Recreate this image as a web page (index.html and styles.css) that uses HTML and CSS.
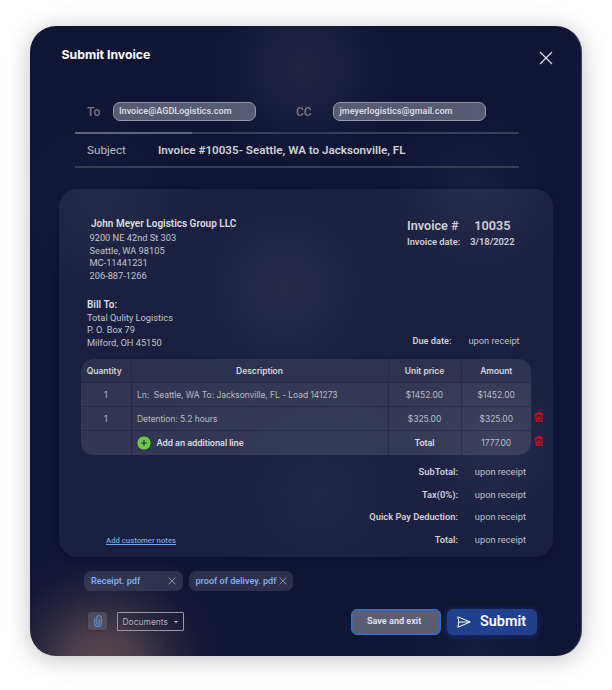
FILE: index.html
```html
<!DOCTYPE html>
<html lang="en">
<head>
<meta charset="utf-8">
<title>Submit Invoice</title>
<link rel="stylesheet" href="styles.css">
</head>
<body>
<main class="modal">
  <header class="head">
    <h1>Submit Invoice</h1>
    <svg class="close" viewBox="0 0 14 14"><path d="M1 1L13 13M13 1L1 13"/></svg>
  </header>

  <section class="mail">
    <div class="row recipients">
      <span class="label to">To</span>
      <span class="pill pill-to"><span>Invoice@AGDLogistics.com</span><svg viewBox="0 0 8 8"><path d="M1 1L7 7M7 1L1 7"/></svg></span>
      <span class="label cc">CC</span>
      <span class="pill pill-cc"><span>jmeyerlogistics@gmail.com</span><svg viewBox="0 0 8 8"><path d="M1 1L7 7M7 1L1 7"/></svg></span>
    </div>
    <div class="row subject">
      <span class="subject-label">Subject</span>
      <strong>Invoice #10035- Seattle, WA to Jacksonville, FL</strong>
    </div>
  </section>

  <section class="card">
    <div class="parties">
      <div class="from">
        <h2>John Meyer Logistics Group LLC</h2>
        <p>9200 NE 42nd St 303</p>
        <p>Seattle, WA 98105</p>
        <p>MC-11441231</p>
        <p>206-887-1266</p>
        <div class="bill">
          <h3>Bill To:</h3>
          <p>Total Qulity Logistics</p>
          <p>P. O. Box 79</p>
          <p>Milford, OH 45150</p>
        </div>
      </div>
      <div class="meta">
        <div class="number"><b>Invoice #</b><b class="no">10035</b></div>
        <div class="date"><b>Invoice date:</b><b class="day">3/18/2022</b></div>
        <div class="due"><b>Due date:</b><span class="upon">upon receipt</span></div>
      </div>
    </div>

    <div class="lines">
      <div class="table">
        <div class="tr th"><span>Quantity</span><span>Description</span><span>Unit price</span><span>Amount</span></div>
        <div class="tr"><span>1</span><span class="desc">Ln:&nbsp; Seattle, WA To: Jacksonville, FL - Load 141273</span><span>$1452.00</span><span>$1452.00</span></div>
        <div class="tr"><span>1</span><span class="desc">Detention: 5.2 hours</span><span>$325.00</span><span>$325.00</span></div>
        <div class="tr last"><span></span><span class="desc add"><svg viewBox="0 0 14 14"><circle cx="7" cy="7" r="6.6"/><path d="M7 4V10M4 7H10"/></svg><b>Add an additional line</b></span><span><b>Total</b></span><span>1777.00</span></div>
      </div>
      <div class="trash">
        <svg viewBox="0 0 10 10"><path d="M.8 2.2H9.2M3.3 2.2V.7H6.7V2.2M1.8 2.2L2.3 9.3H7.7L8.2 2.2M4.2 4.3V7M5.8 4.3V7M4 7.1H6"/></svg>
        <svg viewBox="0 0 10 10"><path d="M.8 2.2H9.2M3.3 2.2V.7H6.7V2.2M1.8 2.2L2.3 9.3H7.7L8.2 2.2M4.2 4.3V7M5.8 4.3V7M4 7.1H6"/></svg>
      </div>
    </div>

    <div class="bottom">
      <a class="notes">Add customer notes</a>
      <div class="totals">
        <b>SubTotal:</b><span class="upon">upon receipt</span>
        <b>Tax(0%):</b><span class="upon">upon receipt</span>
        <b>Quick Pay Deduction:</b><span class="upon">upon receipt</span>
        <b>Total:</b><span class="upon">upon receipt</span>
      </div>
    </div>
  </section>

  <div class="chips">
    <span class="chip c1"><b>Receipt. pdf</b><svg viewBox="0 0 8 8"><path d="M.6 .6L7.4 7.4M7.4 .6L.6 7.4"/></svg></span>
    <span class="chip c2"><b>proof of delivey. pdf</b><svg viewBox="0 0 8 8"><path d="M.6 .6L7.4 7.4M7.4 .6L.6 7.4"/></svg></span>
  </div>

  <footer class="foot">
    <span class="clip"><svg viewBox="0 0 8 12"><path d="M.7 3.2V8.2a3.3 3.3 0 0 0 6.6 0V3a2.25 2.25 0 0 0-4.5 0V8.2a1.2 1.2 0 0 0 2.4 0V3.4"/></svg></span>
    <span class="select"><span>Documents</span><i></i></span>
    <button class="save">Save and exit</button>
    <button class="submit"><svg viewBox="0 0 14 12"><path d="M.9 .8L13.2 6L.9 11.2L1.8 6ZM1.8 6H13"/></svg><span>Submit</span></button>
  </footer>
</main>
</body>
</html>
```
FILE: styles.css
```css
* { box-sizing: border-box; margin: 0; padding: 0; }
body { width: 612px; height: 690px; overflow: hidden; padding: 26px 0 0 30px; background: #fff; font-family: Roboto, "Liberation Sans", sans-serif; color: #d0d1d6; }
svg { display: block; fill: none; flex: none; }
b, strong, h1, h2, h3 { font-weight: 600; }
span, b, p, h1, h2, h3, a, strong { white-space: nowrap; }

.modal {
  width: 551.5px; height: 630px; border-radius: 26px; overflow: hidden;
  display: flex; flex-direction: column;
  box-shadow: 0 3px 24px rgba(0,0,0,.25), inset -1px 0 0 rgba(150,155,185,.4);
  background:
    radial-gradient(circle 125px at 72px 642px, rgba(106,84,84,.8), rgba(102,82,84,.68) 28%, rgba(82,68,82,.36) 55%, rgba(50,48,76,.12) 80%, transparent),
    radial-gradient(circle 95px at 273px 42px, rgba(56,58,86,.4), rgba(54,58,86,.3) 35%, rgba(32,54,92,.12) 70%, transparent),
    radial-gradient(circle 80px at 440px 158px, rgba(50,58,96,.25), rgba(45,56,96,.12) 50%, transparent),
    radial-gradient(circle 85px at 60px 170px, rgba(50,52,95,.16), rgba(50,52,95,.07) 50%, transparent),
    radial-gradient(circle 70px at 445px 632px, rgba(45,60,95,.22), rgba(45,60,95,.09) 50%, transparent),
    #111534;
}

.head { display: flex; justify-content: space-between; height: 74px; padding: 20px 29px 0 31.5px; }
h1 { font: 700 12.3px/18px Inter, sans-serif; color: #fff; }
.close { width: 14px; height: 14px; margin-top: 5px; stroke: #e4e5ea; stroke-width: 1.1; }

.mail { height: 89px; padding-left: 45px; }
.row { display: flex; align-items: center; width: 444px; padding-left: 12px; }
.recipients { height: 34px; padding-bottom: 9px; border-bottom: 2px solid; border-image: linear-gradient(90deg, #62657e 0 117px, #343e57 117px) 1; }
.label { font-size: 12px; font-weight: 500; color: #777881; }
.to { width: 26px; }
.pill { display: flex; align-items: center; justify-content: space-between; height: 19px; margin-top: -1px; border: 1px solid #989aa5; border-radius: 7px; background: #565a72; padding: 0 5px; font-size: 9.05px; font-weight: 600; color: #dadbe0; }
.pill svg { width: 7px; height: 7px; stroke: #62636f; stroke-width: .8; }
.pill-to { width: 142.5px; }
.pill-cc { width: 153px; padding-left: 6px; }
.cc { width: 36.5px; margin-left: 40.5px; }
.subject { height: 34px; border-bottom: 2px solid #343e57; }
.subject-label { width: 71px; font-size: 11.7px; color: #bcbdc6; }
.subject strong { font-size: 11.65px; color: #d0d1d6; }

.card {
  width: 493.5px; height: 367.5px; margin-left: 29px; border-radius: 18px;
  display: flex; flex-direction: column; flex: none;
  box-shadow: 0 2px 7px rgba(8,10,40,.45);
  background:
    radial-gradient(circle 115px at 226px 98px, rgba(62,66,90,.38), rgba(60,64,90,.26) 35%, rgba(44,56,88,.1) 70%, transparent),
    radial-gradient(circle 115px at 420px 0px, rgba(64,68,94,.38), rgba(58,64,92,.24) 40%, rgba(50,56,88,.08) 75%, transparent),
    radial-gradient(circle 120px at 40px 10px, rgba(54,62,86,.34), rgba(50,60,86,.22) 45%, rgba(46,54,82,.07) 78%, transparent),
    radial-gradient(circle 105px at 435px 255px, rgba(68,72,98,.34), rgba(64,68,96,.2) 40%, rgba(56,60,88,.06) 75%, transparent),
    radial-gradient(circle 120px at 260px 305px, rgba(50,62,86,.26), rgba(48,60,86,.16) 45%, rgba(46,54,82,.05) 78%, transparent),
    #1a1e3f;
}
.parties { display: flex; justify-content: space-between; height: 169.5px; padding: 28px 0 0 28px; }
.from p { font-size: 9.25px; line-height: 12.6px; color: #c3c4ca; }
.from > p { padding-left: 2.5px; }
h2 { font-size: 10px; line-height: 14px; padding-left: 4px; margin-bottom: 1px; color: #dcdde0; }
.bill { margin-top: 15.5px; }
h3 { font-size: 10px; line-height: 14px; color: #dcdde0; }
.meta { width: 145.5px; }
.meta > div { display: flex; align-items: center; }
.number { font-size: 12.7px; height: 17px; }
.no { margin-left: 15.5px; }
.date { font-size: 9.3px; height: 15px; }
.day { margin-left: 10px; }
.due { font-size: 9.2px; height: 14px; margin-top: 84.5px; padding-left: 5.5px; }
.due b { width: 56px; }
.upon { font-size: 9.25px; color: #c0c1c8; }

.lines { display: flex; height: 96.5px; }
.table { width: 450px; margin-left: 22px; border-radius: 13px; overflow: hidden; background: linear-gradient(90deg, rgba(83,88,111,.42), rgba(85,90,112,.46)); font: 8.5px Inter, sans-serif; letter-spacing: -.05px; color: #b9bbc5; }
.tr { display: grid; grid-template-columns: 50.5px 257px 73px 69.5px; height: 24px; border-bottom: 1px solid rgba(25,28,64,.45); }
.tr > span { display: flex; align-items: center; justify-content: center; border-right: 1px solid rgba(25,28,64,.5); padding-top: 1px; }
.th > span:first-child { padding-right: 3px; }
.tr > span:last-child { border-right: 0; }
.tr.last { height: 24.5px; border: 0; }
.tr.last > span { padding-top: 0; }
.th { font-weight: 600; color: #d5d6dc; background: rgba(27,31,64,.25); }
.tr > .desc { justify-content: flex-start; padding-left: 5.5px; }
.tr b { color: #dedfe3; }
.add svg { width: 14px; height: 14px; margin-right: 5.5px; fill: #6bcb45; }
.add path { stroke: #20304a; stroke-width: 1.2; }
.trash { display: flex; flex-direction: column; gap: 14px; padding: 53px 0 0 3px; }
.trash svg { width: 10px; height: 10px; stroke: #f2060f; stroke-width: 1.1; }

.bottom { display: flex; justify-content: space-between; height: 101px; padding-right: 26.5px; }
.notes { align-self: flex-end; margin: 0 0 8px 47px; font-size: 7.75px; line-height: 14px; font-weight: 500; color: #74a5ec; text-decoration: underline; }
.totals { display: grid; grid-template-columns: auto 51.5px; column-gap: 16.5px; grid-auto-rows: 22.5px; padding-top: 6px; font-size: 9.3px; line-height: 22.5px; text-align: right; }

.chips { display: flex; gap: 6px; padding: 14.5px 0 0 54px; height: 52px; }
.chip { display: flex; align-items: center; justify-content: space-between; height: 19.5px; border-radius: 7px; background: rgba(75,79,105,.48); padding: 0 7px; font-size: 9.1px; color: #7badf0; }
.chip svg { width: 8px; height: 8px; stroke: #9a9ba6; stroke-width: .9; }
.c1 { width: 98.5px; }
.c2 { width: 104.5px; padding-right: 6px; }

.foot { display: flex; align-items: flex-start; padding-left: 58px; }
.clip { display: flex; align-items: center; justify-content: center; width: 19px; height: 18px; margin-top: 3.5px; border-radius: 3px; background: rgba(105,100,120,.5); box-shadow: 0 1px 2px rgba(0,0,0,.2); }
.clip svg { width: 8px; height: 12px; stroke: #4f95f2; stroke-width: 1.15; }
.select { display: flex; align-items: center; width: 67px; height: 19px; margin: 3.5px 0 0 10px; padding-left: 4.5px; border: 1px solid #9b98a3; border-radius: 1px; font: 8.3px Inter, sans-serif; letter-spacing: .1px; color: #b3b1bb; }
.select i { margin-left: 6px; border: 2px solid transparent; border-top-color: #d5d5dc; border-bottom: 0; }
button { display: flex; align-items: center; font-family: inherit; border: 0; }
.save { width: 90px; height: 26px; margin-left: 167px; padding: 0 0 1px 15px; border: 1.5px solid #2a73d6; border-radius: 6px; background: #5a5d73; box-shadow: inset 0 0 0 .5px #2a73d6; color: #e5e6ea; font-size: 9.1px; font-weight: 600; }
.submit { width: 90px; height: 26px; margin-left: 6px; padding-left: 10px; border-radius: 6px; background: #21418f; box-shadow: 0 1px 6px rgba(32,65,160,.6); color: #fff; font-size: 14.4px; font-weight: 600; }
.submit svg { width: 14px; height: 12px; margin-right: 9px; stroke: #fff; stroke-width: 1; }
```
